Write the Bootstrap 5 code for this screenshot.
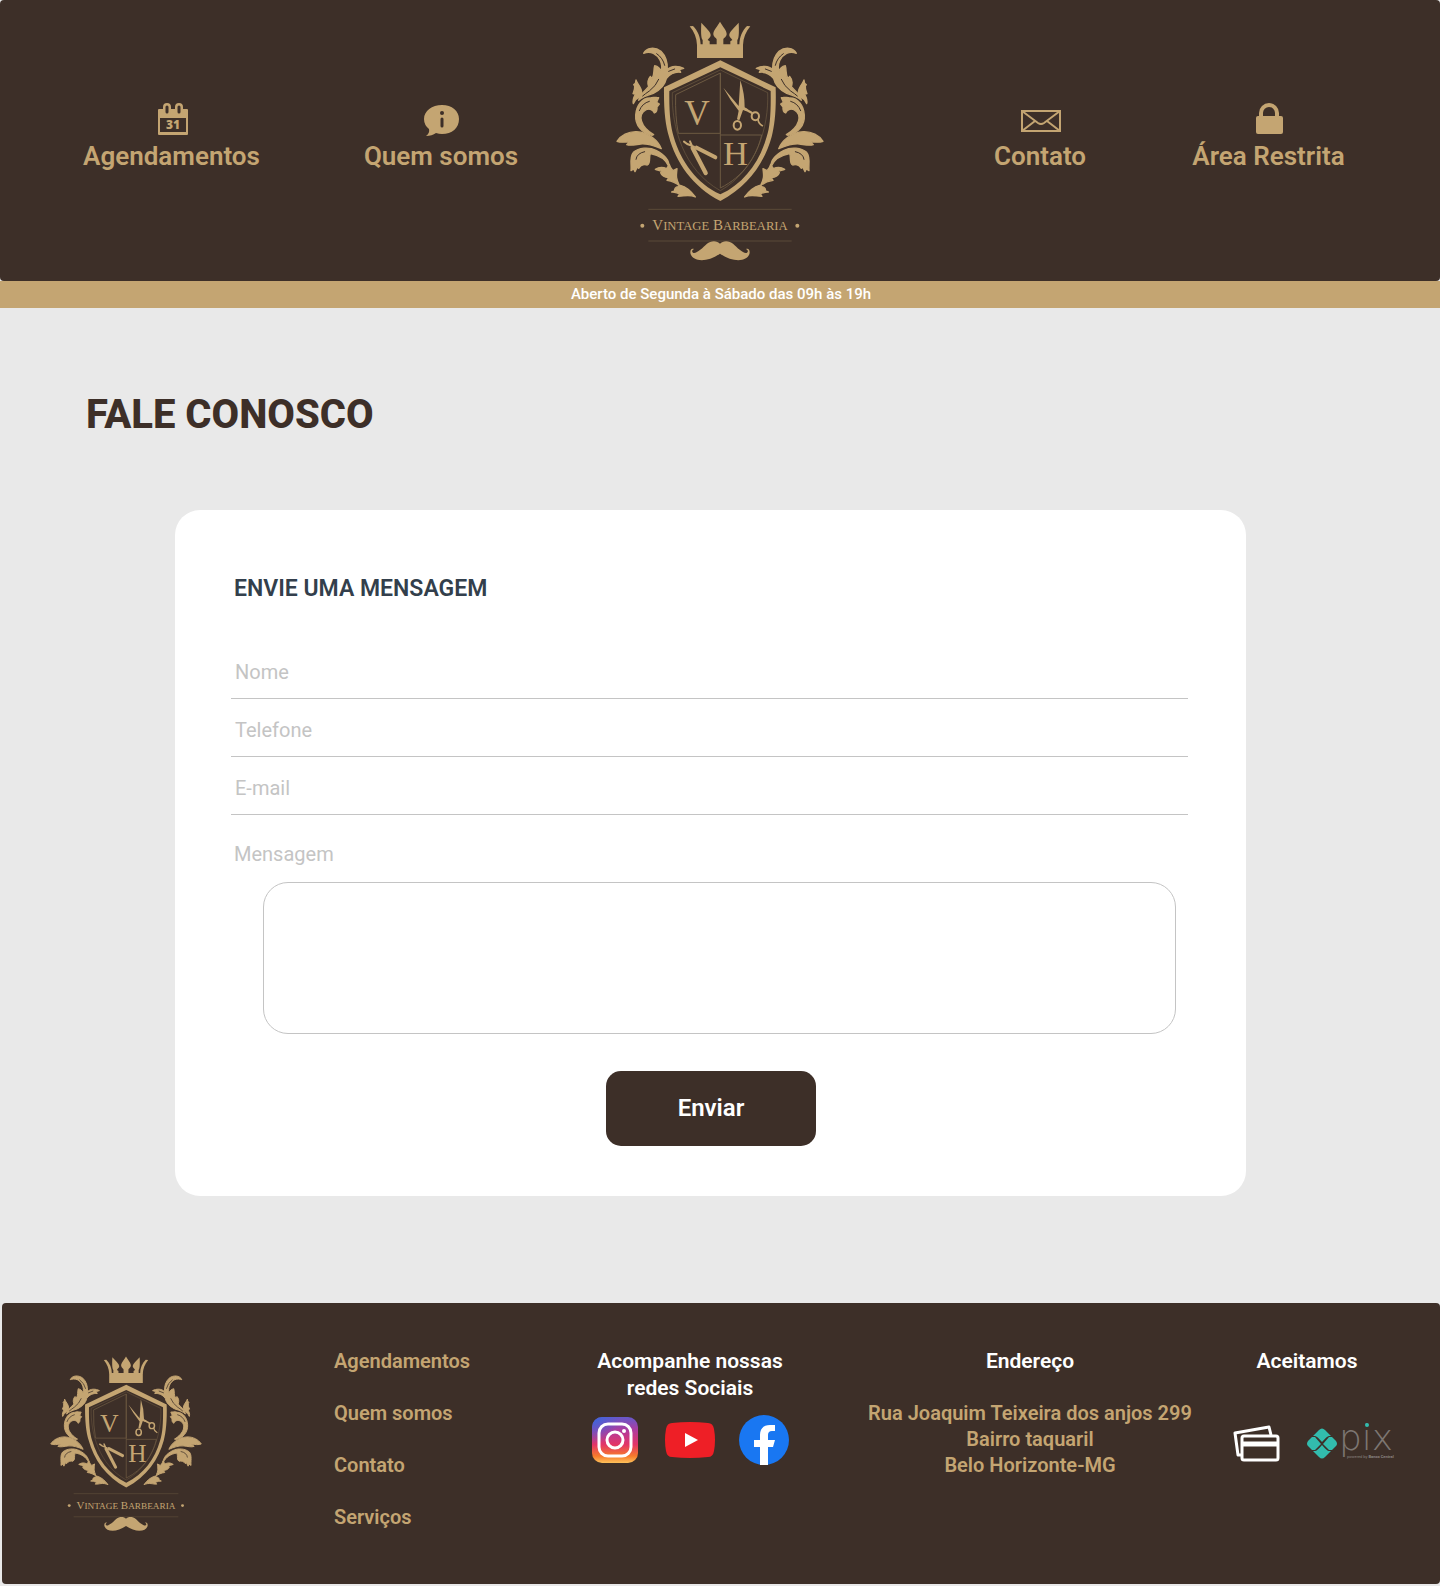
<!DOCTYPE html>
<html lang="pt-BR">
<head>
<meta charset="utf-8">
<meta name="viewport" content="width=device-width, initial-scale=1">
<title>Vintage Barbearia - Fale Conosco</title>
<link href="https://cdn.jsdelivr.net/npm/bootstrap@5.3.0/dist/css/bootstrap.min.css" rel="stylesheet">
<style>
  :root { --brown: #3d2f28; --gold: #c4a572; --line: #c4c4c4; }
  body { background: #e9e9e9; font-family: Roboto, "Liberation Sans", sans-serif; }
  a { text-decoration: none; }
  svg { display: block; flex: none; }

  .site-header { background: var(--brown); border-radius: 4px; padding: 10px 0 11px; }
  .header-grid { display: grid; grid-template-columns: 343fr 196fr 362fr 278fr 179fr 82fr; }
  .menu-link { color: var(--gold); font-size: 26px; line-height: 32px; font-weight: 600; padding-top: 92px; gap: 4px; white-space: nowrap; }
  .menu-link:hover { color: #fff; }
  .hours { background: var(--gold); font-size: 15px; line-height: 27px; font-weight: 500; padding-left: 2px; }

  .page-title { color: var(--brown); font-size: 40px; line-height: 48px; font-weight: 800; margin: 83px 86px 71px; }
  .contact-card { border-radius: 25px; margin: 0 194px 107px 175px; padding: 65px 58px 50px 56px; }
  .card-heading { color: #333f4c; font-size: 23px; line-height: 28px; font-weight: 600; margin: 0 3px 38px; }
  .line-field { height: 58px; border-bottom: 1px solid var(--line); padding: 5px 4px 0; }
  .line-field label { color: var(--line); font-size: 20px; line-height: 24px; white-space: nowrap; }
  .line-field .form-control { background: transparent; border: 0; box-shadow: none; font-size: 20px; }
  .line-field:focus-within { border-bottom-color: var(--brown); }
  .message-label { color: var(--line); font-size: 20px; line-height: 24px; margin: 27px 3px 16px; }
  .message-wrap { padding: 0 12px 0 32px; }
  .message-box { height: 152px; border: 1px solid var(--line); border-radius: 25px; padding: 16px 20px; font-size: 20px; resize: none; }
  .send-row { padding: 37px 0 0 3px; }
  .send-btn { background: var(--brown); color: #fff; width: 210px; height: 75px; border-radius: 15px; padding: 0 0 2px; font-size: 24px; font-weight: 600; }
  .send-btn:hover { background: #55433a; color: #fff; }

  .site-footer { background: var(--brown); border-radius: 4px; margin: 0 0 2px 2px; padding: 45px 0 46px 36px; font-size: 20px; line-height: 26px; font-weight: 600; }
  .footer-grid { display: grid; grid-template-columns: 296fr 196fr 320fr 360fr 194fr 36fr; }
  .footer-links { gap: 26px; }
  .footer-links a, .address { color: var(--gold); }
  .footer-head { color: #fff; font-size: 21px; line-height: 27px; font-weight: 600; margin: 0; }
  .address { margin: 25px 0 0; }
  .pay-row { padding: 49px 0 0 18px; }
  .pix-logo { overflow: visible; }
  .crest-text { font-family: "Liberation Serif", serif; fill: var(--gold); font-weight: 400; }
</style>
</head>
<body>
<svg width="0" height="0" class="position-absolute" aria-hidden="true">
  <defs>
    <g id="leaves">
      <g fill="#c4a572" stroke="#c4a572" stroke-width="4" stroke-linejoin="round">
        <path d="M131 130C139 112 165 110 183 124C197 138 203 155 202 179C214 166 236 167 251 175L238 179L242 187C226 185 210 192 199 206C195 226 180 240 160 250C140 256 125 262 116 271C120 252 135 242 146 230C141 216 144 207 151 199L156 206C164 194 160 180 164 167C172 169 180 174 184 184C189 160 177 138 160 130C150 126 139 127 131 130Z"/>
        <path d="M108 210C110 220 125 230 125 248C123 259 112 266 107 269L100 281C97 270 101 262 106 253L99 251C102 244 105 238 104 228L101 224C105 222 108 216 108 210Z"/>
        <path d="M176 263L170 277L178 282L171 291C172 300 170 306 163 309C160 299 148 294 137 300C112 315 121 350 161 374L156 376C125 370 105 345 107 315C109 286 126 264 150 264C160 259 170 264 176 263Z"/>
        <path d="M51 394C62 376 85 364 110 365C147 367 175 393 184 416C164 408 145 400 122 402C106 404 92 408 80 404L91 394C76 397 62 398 51 394Z"/>
        <path d="M93 482C95 467 88 440 100 427C116 413 146 410 168 421C192 433 208 450 207 470C196 446 175 435 151 431C146 442 153 460 142 465C132 462 122 466 116 475L112 471L105 485L101 477Z"/>
        <path d="M166 478C178 470 188 470 200 476L208 463C210 472 216 478 219 482L231 476C230 492 225 502 239 528C228 518 215 513 201 511L206 503C192 501 185 497 182 488L188 485C180 481 172 481 166 478Z"/>
        <path d="M215 546L224 543C222 536 227 531 234 530L241 526C261 531 276 547 286 561C265 551 248 560 234 559L239 552C230 547 222 547 215 546Z"/>
      </g>
      <g fill="none" stroke="#3d2f28" stroke-width="3" stroke-linecap="round">
        <path d="M170 131Q189 144 194 166"/><path d="M206 184L224 177"/><path d="M176 208Q168 228 148 243Q136 251 128 258"/>
        <path d="M148 274Q126 280 118 302"/><path d="M108 448Q110 430 134 425"/>
      </g>
    </g>
    <symbol id="crest" viewBox="0 0 720 780">
      <g fill="#c4a572">
        <path d="M291 103H429V144H291Z"/>
        <path d="M269 49L279 48C293 62 302 82 302 105H291C290 84 283 66 269 49Z"/>
        <path d="M451 49L441 48C427 62 418 82 418 105H429C430 84 437 66 451 49Z"/>
        <path d="M304 38C316 52 334 66 332 77C330 84 324 86 323 90L329 94V105H308V90C302 84 303 56 304 38Z"/>
        <path d="M416 38C404 52 386 66 388 77C390 84 396 86 397 90L391 94V105H412V90C418 84 417 56 416 38Z"/>
        <path d="M360 35C368 50 381 62 380 73C379 82 371 84 370 88V105H350V88C349 84 341 82 340 73C339 62 352 50 360 35Z"/>
        <path fill-rule="evenodd" d="M361 151L527 232C529 300 524 345 515 380C495 455 445 530 361 573C277 530 227 455 207 380C196 345 191 300 192 232ZM361 172L208 243C207 310 212 350 221 380C243 455 290 520 361 553C432 520 479 455 500 380C510 350 513 310 512 243Z"/>
      </g>
      <g fill="none" stroke="#6d5a42" stroke-width="3">
        <path d="M361 189L227 254Q225 320 235 370H361V189V534C430 500 470 440 485 375H361"/>
        <path d="M361 180L217 248C214 350 250 480 361 542C470 480 507 350 503 248Z" stroke-width="2"/>
      </g>
      <use href="#leaves"/>
      <use href="#leaves" transform="matrix(-1 0 0 1 720 0)"/>
      <text class="crest-text" x="253" y="344" font-size="106">V</text>
      <text class="crest-text" x="369" y="466" font-size="104">H</text>
      <path fill="#c4a572" d="M370 233L416 288L421 211Q434 250 434 292L444 298L440 304L429 300L418 331L411 328L416 302Q390 270 370 233Z"/>
      <g fill="none" stroke="#c4a572" stroke-linecap="round">
        <ellipse cx="412" cy="346" rx="11" ry="13" stroke-width="6"/>
        <ellipse cx="466" cy="319" rx="11" ry="12" stroke-width="6"/>
        <path d="M436 298L455 308" stroke-width="7"/><path d="M474 329Q476 342 487 347" stroke-width="5"/>
        <path d="M278 414L317 489" stroke-width="13"/><path d="M290 413L346 442" stroke-width="12"/>
        <path d="M252 395L262 402L282 410M270 394L276 408" stroke-width="6"/>
      </g>
      <g stroke="#5b4a38" stroke-width="3"><path d="M145 598H575M145 693H575"/></g>
      <circle cx="127" cy="647" r="6" fill="#c4a572"/><circle cx="592" cy="647" r="6" fill="#c4a572"/>
      <text class="crest-text" x="360" y="661" text-anchor="middle" font-size="45">V<tspan font-size="38">INTAGE</tspan> B<tspan font-size="38">ARBEARIA</tspan></text>
      <path fill="#c4a572" d="M360 701C368 691 388 691 399 701C413 714 432 733 441 728C446 724 443 719 438 717C447 713 451 723 448 733C440 755 398 758 360 731C322 758 280 755 272 733C269 723 273 713 282 717C277 719 274 724 279 728C288 733 307 714 321 701C332 691 352 691 360 701Z"/>
    </symbol>
  </defs>
</svg>

<header class="site-header">
  <nav class="header-grid" aria-label="Principal">
    <a href="#" class="menu-link d-flex flex-column align-items-center">
      <svg width="34" height="34" viewBox="0 0 34 34" aria-hidden="true">
        <path fill="#c4a572" fill-rule="evenodd" d="M4 7H32A1 1 0 0 1 33 8V32A1 1 0 0 1 32 33H4A1 1 0 0 1 3 32V8A1 1 0 0 1 4 7ZM5 16V30H31V16Z"/>
        <path d="M12 5V9M24 5V9" stroke="#c4a572" stroke-width="8" stroke-linecap="round"/>
        <path d="M12 5V10M24 5V10" stroke="#3d2f28" stroke-width="3" stroke-linecap="round"/>
        <text x="18" y="27" text-anchor="middle" font-family="Open Sans, sans-serif" font-weight="800" font-size="12" fill="#c4a572">31</text>
      </svg>
      <span>Agendamentos</span>
    </a>
    <a href="#" class="menu-link d-flex flex-column align-items-center">
      <svg width="38" height="34" viewBox="0 0 38 34" aria-hidden="true">
        <path fill="#c4a572" d="M20 3C30 3 37 9 37 17C37 26 30 32 20 32Q17 32 14 31Q10 34 4 34Q8 31 7 27Q2 23 2 17C2 9 10 3 20 3Z"/>
        <circle cx="20" cy="11" r="2" fill="#3d2f28"/><path d="M20 17V24" stroke="#3d2f28" stroke-width="3" stroke-linecap="round"/>
      </svg>
      <span>Quem somos</span>
    </a>
    <a href="#" class="d-flex justify-content-center" aria-label="Vintage Barbearia">
      <svg width="240" height="260"><use href="#crest"/></svg>
    </a>
    <a href="#" class="menu-link d-flex flex-column align-items-center">
      <svg width="42" height="34" viewBox="0 0 42 34" fill="none" stroke="#c4a572" stroke-width="2" aria-hidden="true">
        <path d="M3 9H41V29H3Z"/><path d="M3 9L19 21Q22 23 25 21L41 9M3 29L16 19M41 29L28 19"/>
      </svg>
      <span>Contato</span>
    </a>
    <a href="#" class="menu-link d-flex flex-column align-items-center">
      <svg width="28" height="34" viewBox="0 0 28 34" aria-hidden="true">
        <rect x="1" y="14" width="27" height="18" rx="2" fill="#c4a572"/>
        <path d="M6 15V11A8 8 0 0 1 22 11V15" fill="none" stroke="#c4a572" stroke-width="4"/>
      </svg>
      <span>Área Restrita</span>
    </a>
  </nav>
</header>
<div class="hours text-white text-center">Aberto de Segunda à Sábado das 09h às 19h</div>

<main>
  <h1 class="page-title">FALE CONOSCO</h1>
  <form class="contact-card bg-white">
    <h2 class="card-heading">ENVIE UMA MENSAGEM</h2>
    <div class="line-field d-flex align-items-center">
      <label for="nome">Nome</label>
      <input class="form-control flex-grow-1" id="nome" type="text">
    </div>
    <div class="line-field d-flex align-items-center">
      <label for="telefone">Telefone</label>
      <input class="form-control flex-grow-1" id="telefone" type="tel">
    </div>
    <div class="line-field d-flex align-items-center">
      <label for="email">E-mail</label>
      <input class="form-control flex-grow-1" id="email" type="email">
    </div>
    <label class="message-label d-block" for="mensagem">Mensagem</label>
    <div class="message-wrap">
      <textarea class="form-control message-box" id="mensagem"></textarea>
    </div>
    <div class="send-row d-flex justify-content-center">
      <button class="btn send-btn" type="submit">Enviar</button>
    </div>
  </form>
</main>

<footer class="site-footer">
  <div class="footer-grid">
    <div><svg width="176" height="190" role="img" aria-label="Vintage Barbearia"><use href="#crest"/></svg></div>
    <nav class="footer-links d-flex flex-column align-items-start" aria-label="Rodapé">
      <a href="#">Agendamentos</a>
      <a href="#">Quem somos</a>
      <a href="#">Contato</a>
      <a href="#">Serviços</a>
    </nav>
    <section class="text-center">
      <h2 class="footer-head">Acompanhe nossas<br>redes Sociais</h2>
      <div class="d-flex justify-content-center gap-4 mt-2 pt-1">
        <a href="#" aria-label="Instagram">
          <svg width="50" height="50" viewBox="0 0 50 50">
            <defs>
              <linearGradient id="igBase" x1="0" y1="0" x2="0" y2="1"><stop offset="0" stop-color="#6559ca"/><stop offset=".3" stop-color="#b23a9c"/><stop offset=".6" stop-color="#e33567"/><stop offset=".85" stop-color="#f77b2b"/><stop offset="1" stop-color="#fdc25a"/></linearGradient>
              <radialGradient id="igBlue" cx="0" cy="0" r=".6"><stop offset="0" stop-color="#3a66dd"/><stop offset="1" stop-color="#3a66dd" stop-opacity="0"/></radialGradient>
            </defs>
            <rect x="1" y="3" width="46" height="46" rx="10" fill="url(#igBase)"/><rect x="1" y="3" width="46" height="46" rx="10" fill="url(#igBlue)"/>
            <g fill="none" stroke="#fff" stroke-width="3"><rect x="8" y="10" width="32" height="32" rx="9"/><circle cx="24" cy="26" r="8"/></g>
            <circle cx="33" cy="17" r="2" fill="#fff"/>
          </svg>
        </a>
        <a href="#" aria-label="YouTube">
          <svg width="50" height="50" viewBox="0 0 50 50">
            <path fill="#ee1f26" d="M7 9Q25 7 43 9Q48 9 49 15Q51 26 49 37Q48 43 43 43Q25 45 7 43Q2 43 1 37Q-1 26 1 15Q2 9 7 9Z"/><path fill="#fff" d="M20 19L33 26L20 33Z"/>
          </svg>
        </a>
        <a href="#" aria-label="Facebook">
          <svg width="50" height="51" viewBox="0 0 50 51">
            <circle cx="25" cy="26" r="25" fill="#1977f2"/>
            <path fill="#fff" d="M21 51V33H15V26H21V21C21 14 25 11 31 11Q34 11 36 11V17H33Q29 17 29 21V26H36L34 33H29V51Z"/>
          </svg>
        </a>
      </div>
    </section>
    <section class="text-center">
      <h2 class="footer-head">Endereço</h2>
      <p class="address">Rua Joaquim Teixeira dos anjos 299<br>Bairro taquaril<br>Belo Horizonte-MG</p>
    </section>
    <section class="text-center">
      <h2 class="footer-head">Aceitamos</h2>
      <div class="pay-row d-flex justify-content-center gap-4">
        <svg width="48" height="38" viewBox="0 0 48 38" fill="none" stroke="#fff" stroke-width="3" stroke-linejoin="round" role="img" aria-label="Cartão">
          <path d="M8 31L5 31L2 9L36 3L38 11"/><rect x="9" y="12" width="36" height="24" rx="2"/><path d="M9 20H45" stroke-width="5"/>
        </svg>
        <svg class="pix-logo" width="94" height="38" viewBox="0 0 94 38" role="img" aria-label="Pix">
          <g fill="#32bcad">
            <path d="M14 6Q17 3 20 6L26 12H24Q22 12 17 18Q12 12 10 12H8Z"/>
            <path d="M14 33Q17 36 20 33L26 27H24Q22 27 17 21Q12 27 10 27H8Z"/>
            <path d="M7 13H10L16 20L10 26H7L3 22Q1 20 3 17Z"/>
            <path d="M27 13H24L18 20L24 26H27L31 22Q33 20 31 17Z"/>
          </g>
          <text x="34" y="26" font-family="DejaVu Sans, sans-serif" font-weight="200" font-size="36" fill="#7c7672">pix</text>
          <circle cx="62" cy="1" r="2" fill="#32bcad"/>
          <text x="42" y="34" font-family="Roboto, sans-serif" font-weight="400" font-size="4" fill="#8a8480">powered by <tspan font-weight="700">Banco Central</tspan></text>
        </svg>
      </div>
    </section>
  </div>
</footer>
<script src="https://cdn.jsdelivr.net/npm/bootstrap@5.3.0/dist/js/bootstrap.bundle.min.js"></script>
</body>
</html>
